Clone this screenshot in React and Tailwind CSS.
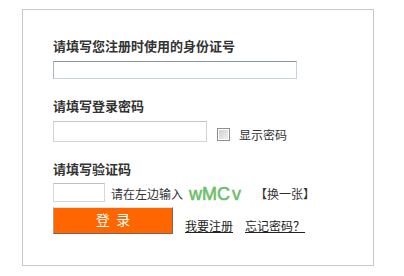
import React from "react";

export default function App() {
  const font = { fontFamily: '"Noto Sans CJK SC", "Noto Sans", sans-serif' };
  return (
    <div className="w-[404px] h-[276px] bg-white overflow-hidden" style={font}>
      <div className="ml-[22px] mt-[9px] w-[352px] h-[257px] border border-[#c8c8c8] pl-[30px] pt-[28px] text-[#333]">
        <div className="text-[13px] leading-[16px] font-bold">请填写您注册时使用的身份证号</div>
        <input className="mt-[7px] block w-[244px] h-[18px] border border-[#c5d3de] border-t-[#8a98a4] border-l-[#a9b6c0] outline-none" />

        <div className="mt-[19px] text-[13px] leading-[16px] font-bold">请填写登录密码</div>
        <div className="mt-[7px] flex items-start">
          <input className="block w-[154px] h-[21px] border border-[#d4d4d4] border-t-[#c4c4c4] outline-none" />
          <div className="ml-[10px] mt-[7px] flex items-center h-[13px]">
            <span className="w-[13px] h-[13px] border border-[#8e8f8f] p-[1px] bg-white flex">
              <span className="flex-1 bg-gradient-to-br from-[#d0d0d0] to-[#f0f0f0]" />
            </span>
            <span className="ml-[9px] text-[12px] leading-[16px] mt-[1px]">显示密码</span>
          </div>
        </div>

        <div className="mt-[19px] text-[13px] leading-[16px] font-bold">请填写验证码</div>
        <div className="mt-[6px] flex items-center h-[19px]">
          <input className="block w-[52px] h-[19px] border border-[#d2d9e0] border-t-[#b8c2cc] outline-none" />
          <span className="ml-[6px] text-[12px] leading-[16px] mt-[3px]">请在左边输入</span>
          <span
            className="ml-[6px] w-[62px] text-[18px] leading-[20px] text-[#6cbf6c] font-normal [-webkit-text-stroke:0.6px_#6cbf6c] mt-[3px]"
            style={{ fontFamily: '"Liberation Sans", Arial, sans-serif' }}
          >
            wMC<span className="ml-[2px]">v</span>
          </span>
          <span className="ml-[4px] text-[12px] leading-[16px] mt-[3px]">【换一张】</span>
        </div>

        <div className="mt-[5px] flex items-end">
          <button className="w-[120px] h-[27px] bg-[#ff6600] border border-t-[#e4e4e4] border-l-[#b0a090] border-b-[#7d6450] border-r-[#7d6450] text-white text-[14px] leading-[16px] pb-[4px]">
            登&nbsp;&nbsp;录
          </button>
          <a href="#" className="ml-[12px] text-[12px] leading-[16px] underline text-[#222]">我要注册</a>
          <a href="#" className="ml-[12px] text-[12px] leading-[16px] underline text-[#222]">忘记密码？</a>
        </div>
      </div>
    </div>
  );
}
